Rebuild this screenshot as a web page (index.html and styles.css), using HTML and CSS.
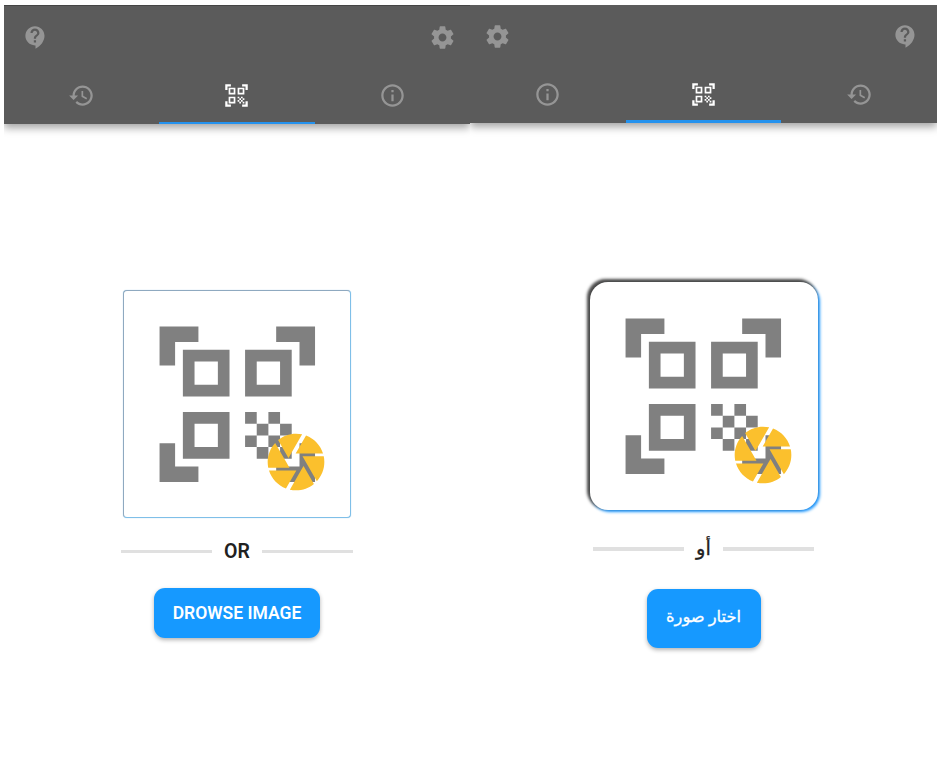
FILE: index.html
```html
<!DOCTYPE html>
<html lang="en">
<head>
<meta charset="utf-8">
<title>QR Scanner</title>
<link rel="stylesheet" href="styles.css">
</head>
<body>
<svg class="defs" aria-hidden="true">
  <symbol id="help" viewBox="0 0 24 24"><path d="M11.5 2C6.81 2 3 5.81 3 10.5S6.81 19 11.5 19h.5v3c4.86-2.34 8-7 8-11.5C20 5.81 16.19 2 11.5 2zm1 14.5h-2v-2h2v2zm0-3.5h-2c0-3.25 3-3 3-5 0-1.1-.9-2-2-2s-2 .9-2 2h-2c0-2.21 1.79-4 4-4s4 1.79 4 4c0 2.5-3 2.75-3 5z"/></symbol>
  <symbol id="settings" viewBox="0 0 24 24"><path d="M19.43 12.98c.04-.32.07-.64.07-.98s-.03-.66-.07-.98l2.11-1.65c.19-.15.24-.42.12-.64l-2-3.46c-.12-.22-.39-.3-.61-.22l-2.49 1c-.52-.4-1.08-.73-1.69-.98l-.38-2.65C14.46 2.18 14.25 2 14 2h-4c-.25 0-.46.18-.49.42l-.38 2.65c-.61.25-1.17.59-1.69.98l-2.49-1c-.23-.09-.49 0-.61.22l-2 3.46c-.13.22-.07.49.12.64l2.11 1.65c-.04.32-.07.65-.07.98s.03.66.07.98l-2.11 1.65c-.19.15-.24.42-.12.64l2 3.46c.12.22.39.3.61.22l2.49-1c.52.4 1.08.73 1.69.98l.38 2.65c.03.24.24.42.49.42h4c.25 0 .46-.18.49-.42l.38-2.65c.61-.25 1.17-.59 1.69-.98l2.49 1c.23.09.49 0 .61-.22l2-3.46c.12-.22.07-.49-.12-.64l-2.11-1.65zM12 15.5c-1.93 0-3.5-1.57-3.5-3.5s1.57-3.5 3.5-3.5 3.5 1.57 3.5 3.5-1.57 3.5-3.5 3.5z"/></symbol>
  <symbol id="history" viewBox="0 0 24 24"><path d="M13 3c-4.97 0-9 4.03-9 9H1l3.89 3.89.07.14L9 12H6c0-3.87 3.13-7 7-7s7 3.13 7 7-3.13 7-7 7c-1.93 0-3.68-.79-4.94-2.06l-1.42 1.42C8.27 19.99 10.51 21 13 21c4.97 0 9-4.03 9-9s-4.03-9-9-9zm-1 5v5l4.28 2.54.72-1.21-3.5-2.08V8H12z"/></symbol>
  <symbol id="info" viewBox="0 0 24 24"><path d="M11 17h2v-6h-2v6zm1-15C6.48 2 2 6.48 2 12s4.48 10 10 10 10-4.48 10-10S17.52 2 12 2zm0 18c-4.41 0-8-3.59-8-8s3.59-8 8-8 8 3.59 8 8-3.59 8-8 8zM11 9h2V7h-2v2z"/></symbol>
  <symbol id="qr" viewBox="0 0 24 24"><path d="M9.5 6.5v3h-3v-3h3M11 5H5v6h6V5zM9.5 14.5v3h-3v-3h3M11 13H5v6h6v-6zM17.5 6.5v3h-3v-3h3M19 5h-6v6h6V5zM13 13h1.5v1.5H13zM14.5 14.5H16V16h-1.5zM16 13h1.5v1.5H16zM13 16h1.5v1.5H13zM14.5 17.5H16V19h-1.5zM16 16h1.5v1.5H16zM17.5 14.5H19V16h-1.5zM17.5 17.5H19V19h-1.5zM22 7h-2V4h-3V2h5v5zM22 22v-5h-2v3h-3v2h5zM2 22h5v-2H4v-3H2v5zM2 2v5h2V4h3V2H2z"/></symbol>
  <symbol id="shutter" viewBox="0 0 24 24"><path d="M9.4 10.5l4.77-8.26C13.47 2.09 12.75 2 12 2c-2.4 0-4.6.85-6.32 2.25l3.66 6.35.06-.1zM21.54 9c-.92-2.92-3.15-5.26-6-6.34L11.88 9h9.66zm.26 1h-7.49l.29.5 4.76 8.25C21 16.97 22 14.61 22 12c0-.69-.07-1.35-.2-2zM8.54 12l-3.9-6.75C3.01 7.03 2 9.39 2 12c0 .69.07 1.35.2 2h7.49l-1.15-2zm-6.08 3c.92 2.92 3.15 5.26 6 6.34L12.12 15H2.46zm11.27 0l-3.9 6.76c.7.15 1.42.24 2.17.24 2.4 0 4.6-.85 6.32-2.25l-3.66-6.35-.93 1.6z"/></symbol>
</svg>
<main class="screens">
  <section class="screen screen-en">
    <header class="bar">
      <div class="actions">
        <svg class="icon"><use href="#help"/></svg>
        <svg class="icon"><use href="#settings"/></svg>
      </div>
      <nav class="tabs">
        <div class="tab"><svg class="icon"><use href="#history"/></svg></div>
        <div class="tab active"><svg class="icon"><use href="#qr"/></svg></div>
        <div class="tab"><svg class="icon"><use href="#info"/></svg></div>
      </nav>
    </header>
    <div class="card">
      <svg class="code"><use href="#qr"/></svg>
      <svg class="shutter"><use href="#shutter"/></svg>
    </div>
    <div class="divider"><span>OR</span></div>
    <button class="browse">DROWSE IMAGE</button>
  </section>
  <section class="screen screen-ar" dir="rtl" lang="ar">
    <header class="bar">
      <div class="actions">
        <svg class="icon"><use href="#help"/></svg>
        <svg class="icon"><use href="#settings"/></svg>
      </div>
      <nav class="tabs">
        <div class="tab"><svg class="icon"><use href="#history"/></svg></div>
        <div class="tab active"><svg class="icon"><use href="#qr"/></svg></div>
        <div class="tab"><svg class="icon"><use href="#info"/></svg></div>
      </nav>
    </header>
    <div class="card">
      <svg class="code"><use href="#qr"/></svg>
      <svg class="shutter"><use href="#shutter"/></svg>
    </div>
    <div class="divider"><span>أو</span></div>
    <button class="browse">اختار صورة</button>
  </section>
</main>
</body>
</html>
```
FILE: styles.css
```css
* { box-sizing: border-box; }
body { margin: 0; background: #fff; font-family: Roboto, "Noto Sans", "DejaVu Sans", sans-serif; }
.defs { display: none; }
svg { display: block; fill: currentColor; }

.screens {
  display: grid;
  grid-template-columns: 466px 467px;
  height: 771px;
  padding: 5px 5px 0 4px;
}
.screen {
  display: flex;
  flex-direction: column;
  align-items: center;
  overflow: hidden;
}

.bar {
  width: 100%;
  height: 119px;
  flex: none;
  display: flex;
  flex-direction: column;
  background: #5b5b5b;
  color: #959595;
  box-shadow: 0 4px 8px rgba(0, 0, 0, .36);
}
.screen-en .bar { border-top: 1px solid #444; }
.screen-ar .bar { height: 118px; }
.actions {
  display: flex;
  justify-content: space-between;
  height: 62px;
  padding: 18px 14px 0 18px;
}
.screen-ar .actions { padding-inline: 18px 14px; }
.icon { width: 27px; height: 27px; }
.tabs {
  flex: 1;
  display: grid;
  grid-template-columns: repeat(3, 1fr);
}
.tab {
  display: flex;
  justify-content: center;
  padding-top: 14px;
  border-bottom: 2px solid transparent;
}
.tab.active { color: #fff; border-bottom-color: #2492ee; }
.screen-ar .tab { border-bottom-width: 3px; }

.card {
  position: relative;
  flex: none;
  display: flex;
  align-items: center;
  justify-content: center;
  width: 228px;
  height: 228px;
  color: #808080;
  background: #fff;
}
.screen-en .card {
  margin-top: 166px;
  border: 1px solid;
  border-color: #8fa9c0 #7fbfe8 #7fbfe8 #8fa9c0;
  border-radius: 4px;
  box-shadow: 0 0 1px #8cc3e4;
  padding: .8px 0 0 .8px;
}
.screen-ar .card {
  margin-top: 159px;
  border-radius: 18px;
  box-shadow: -2px -2px 3px .5px #484848, 1.5px 1.5px 3px .5px #1e98ff;
}
.code { flex: none; width: 186.6px; height: 186.6px; }
.shutter {
  position: absolute;
  left: 138.3px;
  top: 137.4px;
  width: 68px;
  height: 68px;
  color: #fbc02d;
}
.screen-ar .shutter { left: 139px; top: 138.5px; }

.divider {
  display: flex;
  align-items: center;
  justify-content: center;
  gap: 12px;
  height: 30px;
  margin-top: 18.5px;
  color: #212121;
  font-size: 19.5px;
  font-weight: 600;
  line-height: 30px;
}
.divider::before, .divider::after {
  content: "";
  width: 91px;
  height: 3.5px;
  background: #e0e0e0;
}
.screen-ar .divider { margin-top: 24px; font-weight: 400; }
.screen-ar .divider span { -webkit-text-stroke: .3px; }

.browse {
  display: flex;
  align-items: center;
  justify-content: center;
  width: 166px;
  height: 50px;
  margin: 21.5px 0 0;
  padding: 0;
  border: 0;
  border-radius: 11px;
  background: #1699ff;
  color: #fff;
  font: 600 17.5px Roboto, "Noto Sans", "DejaVu Sans", sans-serif;
  white-space: nowrap;
  box-shadow: 0 2px 4px rgba(0, 0, 0, .3);
}
.screen-ar .browse {
  width: 114px;
  height: 59px;
  margin-top: 24.5px;
  padding: 0 0 4px;
  font-size: 16.3px;
  font-weight: 400;
  -webkit-text-stroke: .3px;
}
```
